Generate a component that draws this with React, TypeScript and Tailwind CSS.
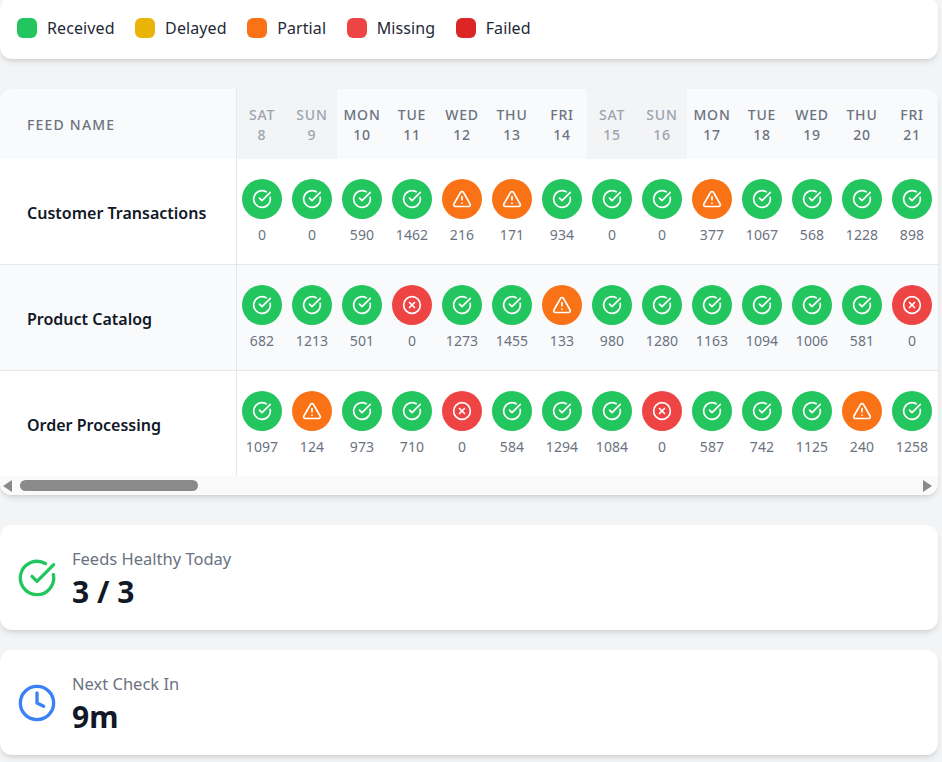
import { CircleCheckBig, CircleX, Clock, TriangleAlert } from 'lucide-react'

type Status = 'ok' | 'partial' | 'missing'

interface Cell {
  status: Status
  count: number
}

const legend = [
  { label: 'Received', color: 'bg-[#22c55e]' },
  { label: 'Delayed', color: 'bg-[#eab308]' },
  { label: 'Partial', color: 'bg-[#f97316]' },
  { label: 'Missing', color: 'bg-[#ef4444]' },
  { label: 'Failed', color: 'bg-[#dc2626]' },
]

const days = [
  ['SAT', 8],
  ['SUN', 9],
  ['MON', 10],
  ['TUE', 11],
  ['WED', 12],
  ['THU', 13],
  ['FRI', 14],
  ['SAT', 15],
  ['SUN', 16],
  ['MON', 17],
  ['TUE', 18],
  ['WED', 19],
  ['THU', 20],
  ['FRI', 21],
] as const

function cells(counts: number[], partial: number[], missing: number[]): Cell[] {
  return counts.map((count, i) => ({
    count,
    status: partial.includes(i) ? 'partial' : missing.includes(i) ? 'missing' : 'ok',
  }))
}

const feeds = [
  {
    name: 'Customer Transactions',
    cells: cells([0, 0, 590, 1462, 216, 171, 934, 0, 0, 377, 1067, 568, 1228, 898], [4, 5, 9], []),
  },
  {
    name: 'Product Catalog',
    cells: cells([682, 1213, 501, 0, 1273, 1455, 133, 980, 1280, 1163, 1094, 1006, 581, 0], [6], [3, 13]),
  },
  {
    name: 'Order Processing',
    cells: cells([1097, 124, 973, 710, 0, 584, 1294, 1084, 0, 587, 742, 1125, 240, 1258], [1, 12], [4, 8]),
  },
]

function StatusDot({ status }: { status: Status }) {
  if (status === 'partial') {
    return (
      <div className="w-10 h-10 rounded-full bg-[#f97316] flex items-center justify-center text-white">
        <TriangleAlert size={20} />
      </div>
    )
  }
  if (status === 'missing') {
    return (
      <div className="w-10 h-10 rounded-full bg-[#ef4444] flex items-center justify-center text-white">
        <CircleX size={20} />
      </div>
    )
  }
  return (
    <div className="w-10 h-10 rounded-full bg-[#22c55e] flex items-center justify-center text-white">
      <CircleCheckBig size={20} />
    </div>
  )
}

function StatCard({ icon, label, value }: { icon: React.ReactNode; label: string; value: string }) {
  return (
    <div className="h-[105px] bg-white rounded-xl shadow-md flex items-center gap-[15px] pl-[17px] pr-4">
      {icon}
      <div className="pt-[2px]">
        <div className="text-[16.5px] leading-6 text-[#6b7280]">{label}</div>
        <div className="mt-[3px] text-[30px] leading-9 font-bold text-[#111827]">{value}</div>
      </div>
    </div>
  )
}

export default function App() {
  return (
    <div className="min-h-[762px] bg-[#f3f4f6] pr-1 -mt-[3px] pb-2 font-['Noto_Sans',sans-serif]">
      <div className="h-[62px] bg-white rounded-xl shadow-md flex items-center px-[17px] gap-[20.5px]">
        {legend.map(l => (
          <div key={l.label} className="flex items-center gap-[10px]">
            <div className={`w-5 h-5 rounded-md ${l.color}`} />
            <span className="text-[16px] text-[#1f2937] tracking-[0.1px]">{l.label}</span>
          </div>
        ))}
      </div>

      <div className="mt-[30px] bg-white rounded-xl shadow-md overflow-hidden">
        <div className="flex h-[70px] bg-[#f9fafb]">
          <div className="w-[237px] shrink-0 border-r border-[#e5e7eb] flex items-center pl-[27px] text-[14px] font-medium tracking-[1.2px] text-[#6b7280]">
            FEED NAME
          </div>
          {days.map(([day, date], i) => {
            const weekend = day === 'SAT' || day === 'SUN'
            return (
              <div
                key={i}
                className={`w-[50px] shrink-0 flex flex-col items-center justify-center pt-[2px] text-[14px] leading-[20px] font-medium tracking-[0.8px] ${
                  weekend ? 'bg-[#f3f4f6] text-[#9ca3af]' : 'text-[#6b7280]'
                }`}
              >
                <span>{day}</span>
                <span>{date}</span>
              </div>
            )
          })}
        </div>

        {feeds.map((feed, r) => (
          <div
            key={feed.name}
            className={`flex ${r < 2 ? 'h-[106px] border-b border-[#e5e7eb]' : 'h-[105px]'} ${r === 1 ? 'bg-[#f9fafb]' : ''}`}
          >
            <div className="w-[237px] shrink-0 border-r border-[#e5e7eb] flex items-center pl-[27px] pt-[2px] text-[16px] font-semibold text-[#111827]">
              {feed.name}
            </div>
            {feed.cells.map((c, i) => (
              <div key={i} className="w-[50px] shrink-0 flex flex-col items-center pt-5 gap-[6px]">
                <StatusDot status={c.status} />
                <span className="text-[14px] leading-5 text-[#6b7280] tracking-[0.1px]">{c.count}</span>
              </div>
            ))}
          </div>
        ))}

        <div className="h-[19px] bg-[#fafafa] flex items-center justify-between pl-[3px] pr-[6px]">
          <div className="flex items-center gap-[8px]">
            <svg width="9" height="12" viewBox="0 0 9 12">
              <path d="M0 6 L9 0 V12 Z" fill="#8a8a8a" />
            </svg>
            <div className="w-[178px] h-[11px] rounded-full bg-[#8a8a8a]" />
          </div>
          <svg width="9" height="12" viewBox="0 0 9 12">
            <path d="M9 6 L0 0 V12 Z" fill="#8a8a8a" />
          </svg>
        </div>
      </div>

      <div className="mt-[30px] flex flex-col gap-5">
        <StatCard
          icon={<CircleCheckBig size={40} className="text-[#22c55e]" />}
          label="Feeds Healthy Today"
          value="3 / 3"
        />
        <StatCard icon={<Clock size={40} className="text-[#3b82f6]" />} label="Next Check In" value="9m" />
      </div>
    </div>
  )
}
